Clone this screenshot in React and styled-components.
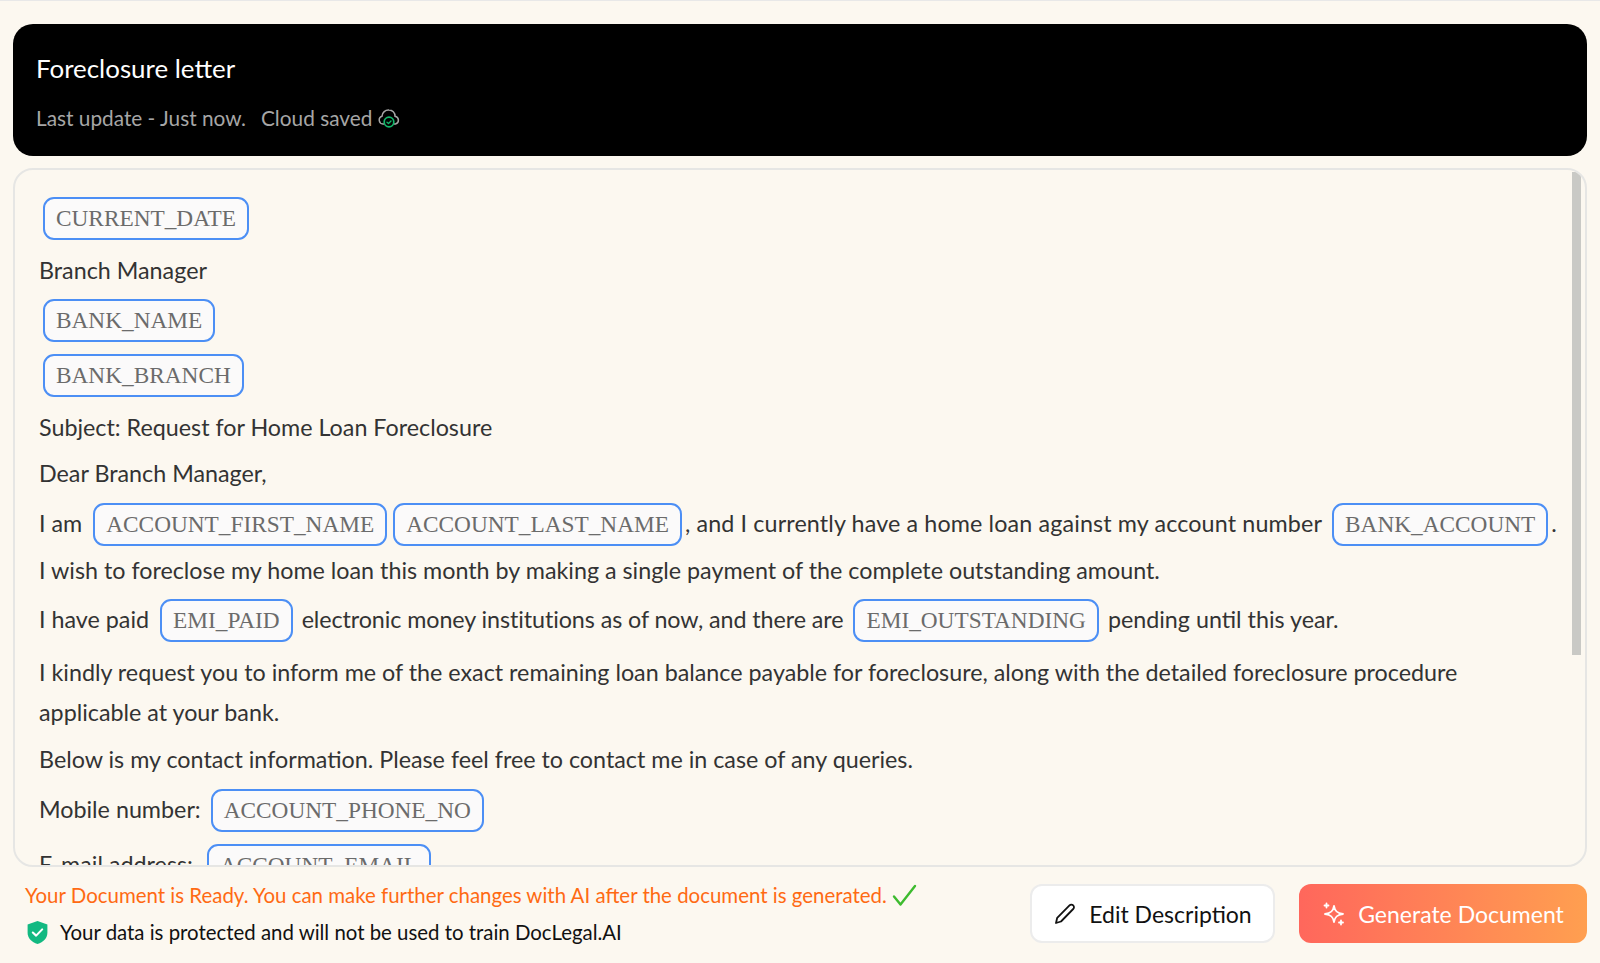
import React from "react";
import styled, { createGlobalStyle } from "styled-components";

const Global = createGlobalStyle`
  html, body { margin: 0; padding: 0; height: 100%; background: #fcf8f0; overflow: hidden; }
  body { font-family: Lato, "Open Sans", sans-serif; }
  * { box-sizing: border-box; }
`;

const Page = styled.div`
  height: 963px;
  border-top: 1px solid #e8e8e8;
  padding: 23px 13px 0;
  display: flex;
  flex-direction: column;
`;

const Header = styled.header`
  height: 132px;
  flex: none;
  background: #000;
  border-radius: 20px;
  padding: 27px 23px 0;
`;

const Title = styled.h1`
  margin: 0;
  font-size: 25.9px;
  line-height: 34px;
  font-weight: 400;
  color: #fff;
`;

const Meta = styled.div`
  margin-top: 19px;
  display: flex;
  align-items: center;
  font-size: 20.8px;
  line-height: 28px;
  color: #a6a6a6;
`;

const MetaGap = styled.span`
  margin-left: 15px;
`;

const CloudIcon = styled.svg`
  margin-left: 6px;
  width: 22px;
  height: 22px;
`;

const DocPanel = styled.section`
  position: relative;
  margin-top: 12px;
  height: 699px;
  flex: none;
  border: 2px solid #e6e6e4;
  border-radius: 20px;
  padding: 0 0 0 24px;
  overflow: hidden;
  font-size: 23.3px;
  color: #333;
`;

const ScrollThumb = styled.div`
  position: absolute;
  top: 2px;
  right: 4px;
  width: 9px;
  height: 483px;
  background: #c9c9c5;
`;

const Para = styled.p`
  margin: ${(p) => p.$top || 0}px 0 0;
  line-height: 41px;
  white-space: nowrap;
`;

const Wrapped = styled(Para)`
  white-space: normal;
  width: 1490px;
  line-height: 40px;
`;

const ChipRow = styled.div`
  margin-top: ${(p) => p.$top || 0}px;
  height: 43px;
  padding-bottom: 3px;
  flex: none;
  display: flex;
  align-items: center;
  white-space: pre;
`;

const Spaced = styled.span`
  letter-spacing: ${(p) => p.$spacing}px;
`;

const Chip = styled.span`
  display: block;
  flex: none;
  align-self: flex-start;
  height: 43px;
  line-height: 38px;
  margin: 0 ${(p) => p.$right ?? 3}px 0 ${(p) => p.$left ?? 3}px;
  padding: 0 11px;
  border: 2px solid #4c8ff5;
  border-radius: 11px;
  background: #fbfafa;
  font-family: "Liberation Serif", "Times New Roman", serif;
  font-size: 23.3px;
  color: #6b6b6b;
`;

const Footer = styled.footer`
  flex: 1;
  display: flex;
  justify-content: space-between;
  padding: 0 0 0 12px;
`;

const Notes = styled.div`
  padding-top: 13px;
`;

const Ready = styled.div`
  display: flex;
  align-items: center;
  height: 30px;
  font-size: 20.45px;
  color: #ff6a13;
`;

const CheckIcon = styled.svg`
  margin-left: 5px;
  width: 25px;
  height: 25px;
`;

const Safe = styled.div`
  margin-top: 7px;
  display: flex;
  align-items: center;
  height: 30px;
  font-size: 20.4px;
  color: #111;
`;

const ShieldIcon = styled.svg`
  margin: 0 11px 0 1px;
  width: 23px;
  height: 25px;
`;

const Actions = styled.div`
  display: flex;
  gap: 24px;
  padding-top: 17px;
`;

const BaseButton = styled.button`
  height: 59px;
  border-radius: 12px;
  display: flex;
  align-items: center;
  justify-content: center;
  font-family: inherit;
  font-size: 23px;
  cursor: pointer;
`;

const EditButton = styled(BaseButton)`
  width: 245px;
  gap: 12px;
  background: #fff;
  border: 2px solid #ececec;
  color: #111;
`;

const GenerateButton = styled(BaseButton)`
  width: 288px;
  gap: 12px;
  border: 0;
  color: #fff;
  background: linear-gradient(90deg, #ff675c 0%, #ff9f50 100%);
`;

export default function App() {
  return (
    <Page>
      <Global />
      <Header>
        <Title>Foreclosure letter</Title>
        <Meta>
          Last update - Just now.<MetaGap>Cloud saved</MetaGap>
          <CloudIcon viewBox="0 0 22 22" fill="none">
            <path d="M6 17H5a4 4 0 0 1-1-7.800A6.500 6.500 0 0 1 11 3a6 6 0 0 1 6 6.200A4 4 0 0 1 17.500 17H16" stroke="#a6a6a6" strokeWidth="1.500" strokeLinecap="round" />
            <circle cx="11" cy="15" r="4.800" stroke="#12b76a" strokeWidth="1.700" />
            <path d="M9 15.200l1.500 1.300L13 14" stroke="#12b76a" strokeWidth="1.400" strokeLinecap="round" strokeLinejoin="round" />
          </CloudIcon>
        </Meta>
      </Header>
      <DocPanel>
        <ChipRow $top={27}><Chip $left={4}>CURRENT_DATE</Chip></ChipRow>
        <Para $top={10}>Branch Manager</Para>
        <ChipRow $top={8}><Chip $left={4}>BANK_NAME</Chip></ChipRow>
        <ChipRow $top={12}><Chip $left={4}>BANK_BRANCH</Chip></ChipRow>
        <Para $top={10}>Subject: Request for Home Loan Foreclosure</Para>
        <Para $top={5}>Dear Branch Manager,</Para>
        <ChipRow $top={9}>
          I am<Chip $left={11}>ACCOUNT_FIRST_NAME</Chip><Chip>ACCOUNT_LAST_NAME</Chip>
          <Spaced $spacing={0.13}>, and I currently have a home loan against my account number</Spaced>
          <Chip $left={10}>BANK_ACCOUNT</Chip>.
        </ChipRow>
        <Para $top={4}>I wish to foreclose my home loan this month by making a single payment of the complete outstanding amount.</Para>
        <ChipRow $top={8}>
          I have paid<Chip $left={11} $right={9}>EMI_PAID</Chip>
          <Spaced $spacing={-0.08}>electronic money institutions as of now, and there are</Spaced>
          <Chip $left={10} $right={9}>EMI_OUTSTANDING</Chip>pending until this year.
        </ChipRow>
        <Wrapped $top={10}>I kindly request you to inform me of the exact remaining loan balance payable for foreclosure, along with the detailed foreclosure procedure applicable at your bank.</Wrapped>
        <Para $top={7}>Below is my contact information. Please feel free to contact me in case of any queries.</Para>
        <ChipRow $top={9}>Mobile number:<Chip $left={10}>ACCOUNT_PHONE_NO</Chip></ChipRow>
        <ChipRow $top={12}>E-mail address:<Chip $left={14}>ACCOUNT_EMAIL</Chip></ChipRow>
        <ScrollThumb />
      </DocPanel>
      <Footer>
        <Notes>
          <Ready>
            Your Document is Ready. You can make further changes with AI after the document is generated.
            <CheckIcon viewBox="0 0 25 25" fill="none">
              <path d="M2 13.500l6.500 8L23 3" stroke="#3dbb2f" strokeWidth="2.400" strokeLinecap="round" strokeLinejoin="round" />
            </CheckIcon>
          </Ready>
          <Safe>
            <ShieldIcon viewBox="0 0 22 24">
              <path d="M11 1l9.500 3.200v8c0 5.300-3.900 9-9.500 10.800C5.400 21.200 1.500 17.500 1.500 12.200v-8z" fill="#12b981" />
              <path d="M6.500 12l3.200 3 5.800-6" fill="none" stroke="#fff" strokeWidth="2" strokeLinecap="round" strokeLinejoin="round" />
            </ShieldIcon>
            Your data is protected and will not be used to train DocLegal.AI
          </Safe>
        </Notes>
        <Actions>
          <EditButton>
            <svg width="24" height="24" viewBox="0 0 24 24" fill="none" stroke="#111" strokeWidth="1.800" strokeLinejoin="round" strokeLinecap="round">
              <path d="M3 21l1.200-5.200L16.500 3.300a2.600 2.600 0 0 1 3.700 0 2.600 2.600 0 0 1 0 3.700L8 19.500z" />
            </svg>
            Edit Description
          </EditButton>
          <GenerateButton>
            <svg width="24" height="24" viewBox="0 0 24 24" fill="none" stroke="#fff" strokeWidth="1.800" strokeLinejoin="round">
              <path d="M12 4C12.800 9 15 11.200 21 12C15 12.800 12.800 15 12 20C11.200 15 9 12.800 3 12C9 11.200 11.200 9 12 4z" />
              <path d="M4.500 1.500v4M2.500 3.500h4M19 18.500v4M17 20.500h4" strokeLinecap="round" />
            </svg>
            Generate Document
          </GenerateButton>
        </Actions>
      </Footer>
    </Page>
  );
}
